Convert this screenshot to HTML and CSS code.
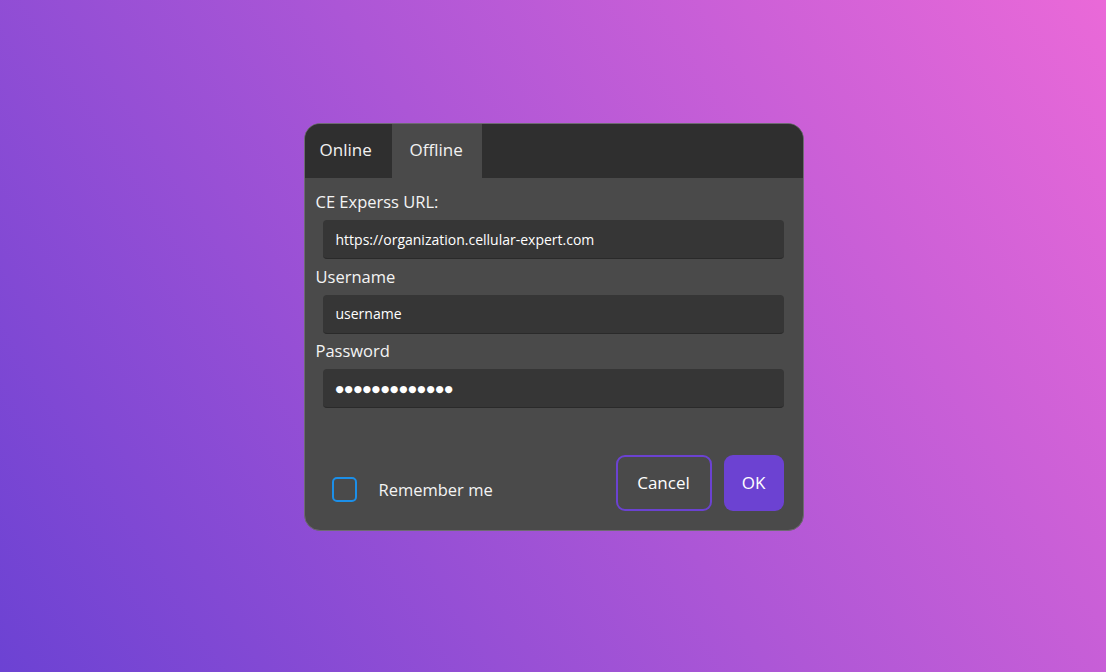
FILE: index.html
```html
<!DOCTYPE html>
<html lang="en">
<head>
<meta charset="utf-8">
<title>Login</title>
<link rel="stylesheet" href="styles.css">
</head>
<body>
<div class="stage">
  <div class="dialog">
    <div class="tabs">
      <div class="tab tab-online">Online</div>
      <div class="tab tab-offline active">Offline</div>
    </div>
    <div class="body">
      <div class="field">
        <div class="label">CE Experss URL:</div>
        <div class="input">https://organization.cellular-expert.com</div>
      </div>
      <div class="field">
        <div class="label">Username</div>
        <div class="input">username</div>
      </div>
      <div class="field">
        <div class="label">Password</div>
        <div class="input input-pass"><span class="dots">●●●●●●●●●●●●●</span></div>
      </div>
      <div class="footer">
        <div class="remember">
          <span class="checkbox"></span>
          <span class="remember-text">Remember me</span>
        </div>
        <div class="buttons">
          <button class="btn btn-cancel">Cancel</button>
          <button class="btn btn-ok">OK</button>
        </div>
      </div>
    </div>
  </div>
</div>
</body>
</html>
```

FILE: styles.css
```css
* { box-sizing: border-box; }
html, body {
  margin: 0;
  padding: 0;
  width: 1106px;
  height: 672px;
  overflow: hidden;
}
body {
  font-family: "Open Sans", "Noto Sans", sans-serif;
  color: #ffffff;
  background: linear-gradient(57deg, #6c42d3 0%, #ac56d6 50%, #ea69d8 100%);
}
.stage {
  width: 1106px;
  height: 672px;
  display: flex;
  justify-content: center;
  align-items: flex-start;
  padding-top: 123px;
  padding-left: 1px;
}
.dialog {
  width: 500px;
  height: 408px;
  border: 1px solid #6e6a72;
  border-radius: 16px;
  overflow: hidden;
  background: #4a4a4a;
  display: flex;
  flex-direction: column;
}
.tabs {
  height: 54px;
  background: #2f2f2f;
  display: flex;
  flex: none;
}
.tab {
  display: flex;
  align-items: center;
  font-size: 17px;
  color: #f2f2f2;
  padding-bottom: 3px;
}
.tab-online { width: 87px; padding-left: 15px; }
.tab-offline { width: 90px; padding-left: 18px; }
.tab.active { background: #4a4a4a; }
.body {
  flex: 1;
  display: flex;
  flex-direction: column;
  padding: 12px 19px 0 11px;
}
.field {
  display: flex;
  flex-direction: column;
  margin-bottom: 5.5px;
}
.label {
  height: 24px;
  line-height: 24px;
  font-size: 16.5px;
  color: #f4f4f4;
  margin-bottom: 6px;
}
.input {
  margin-left: 7px;
  height: 39px;
  background: #363636;
  border-radius: 4px;
  border-bottom: 1px solid #2a2a2a;
  padding-left: 13px;
  display: flex;
  align-items: center;
  font-size: 14px;
  color: #ffffff;
}
.dots {
  font-family: "DejaVu Sans", sans-serif;
  font-size: 9.5px;
  letter-spacing: 0.8px;
  color: #ffffff;
}
.footer {
  margin-top: 41px;
  display: flex;
  justify-content: space-between;
  align-items: flex-start;
}
.remember {
  display: flex;
  align-items: center;
  margin-top: 22px;
  margin-left: 16px;
}
.checkbox {
  width: 25px;
  height: 25px;
  border: 2px solid #1c8fe8;
  border-radius: 5px;
  display: inline-block;
}
.remember-text {
  margin-left: 22px;
  font-size: 16.5px;
  color: #f4f4f4;
}
.buttons {
  display: flex;
  gap: 12px;
}
.btn {
  font-family: "Open Sans", "Noto Sans", sans-serif;
  font-size: 17px;
  color: #ffffff;
  height: 56px;
  border-radius: 9px;
  cursor: pointer;
}
.btn-cancel {
  width: 96px;
  background: #4a4a4a;
  border: 2.5px solid #6b42d1;
}
.btn-ok {
  width: 60px;
  background: #6c42d2;
  border: none;
}
```
